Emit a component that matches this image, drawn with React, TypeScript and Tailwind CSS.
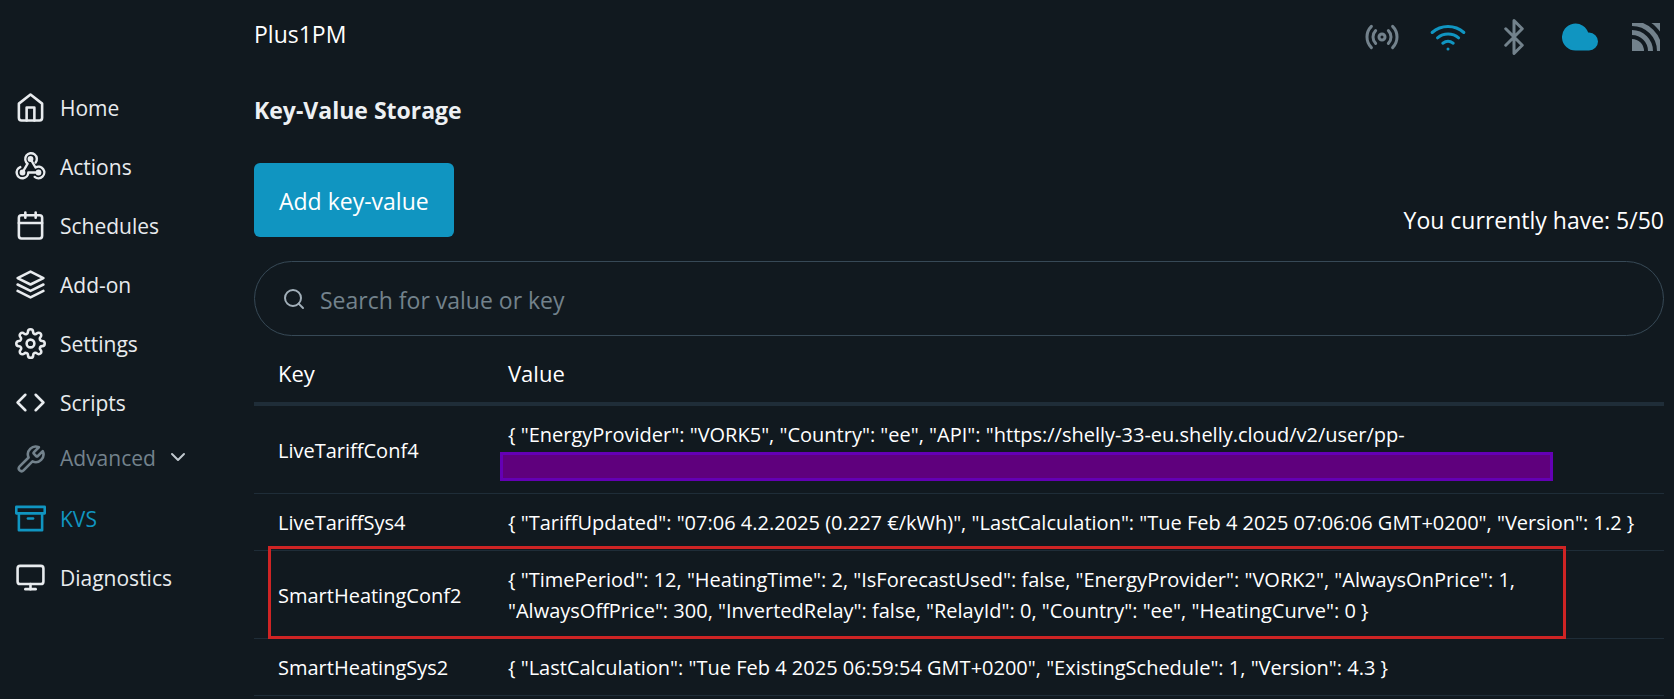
import React from "react";
import {
  FiArchive,
  FiBluetooth,
  FiCalendar,
  FiChevronDown,
  FiCloud,
  FiCode,
  FiHome,
  FiLayers,
  FiMonitor,
  FiRadio,
  FiSearch,
  FiSettings,
  FiTool,
  FiWifi,
} from "react-icons/fi";

type IconType = React.ComponentType<{ size?: number; className?: string }>;

function WebhookIcon({ size = 31, className = "" }: { size?: number; className?: string }) {
  return (
    <svg
      width={size}
      height={size}
      viewBox="0 0 31 31"
      fill="none"
      stroke="currentColor"
      strokeWidth="2.4"
      strokeLinecap="round"
      strokeLinejoin="round"
      className={className}
      aria-hidden="true"
    >
      <path d="M20.6 11.6A5.8 5.8 0 1 0 12.6 12.7L7.5 21.5" />
      <path d="M5.3 16.1A5.8 5.8 0 1 0 13.3 21.5H23.5" />
      <path d="M19.7 25.9A5.8 5.8 0 1 0 20.5 16.5L15.5 8" />
      <g fill="currentColor" stroke="none">
        <circle cx="15.5" cy="8" r="2.9" />
        <circle cx="7.5" cy="21.5" r="2.9" />
        <circle cx="23.5" cy="21.5" r="2.9" />
      </g>
    </svg>
  );
}

const nav: { label: string; Icon: IconType; tone: string }[] = [
  { label: "Home", Icon: FiHome, tone: "text-[#e8ebee]" },
  { label: "Actions", Icon: WebhookIcon, tone: "text-[#e8ebee]" },
  { label: "Schedules", Icon: FiCalendar, tone: "text-[#e8ebee]" },
  { label: "Add-on", Icon: FiLayers, tone: "text-[#e8ebee]" },
  { label: "Settings", Icon: FiSettings, tone: "text-[#e8ebee]" },
  { label: "Scripts", Icon: FiCode, tone: "text-[#e8ebee]" },
  { label: "Advanced", Icon: FiTool, tone: "text-[#73828c]" },
  { label: "KVS", Icon: FiArchive, tone: "text-[#1095c1]" },
  { label: "Diagnostics", Icon: FiMonitor, tone: "text-[#e8ebee]" },
];

function SignalTile() {
  return (
    <svg viewBox="0 0 28 28" className="size-7" fill="none" stroke="currentColor" aria-hidden="true">
      <circle cx="0" cy="28" r="12" fill="currentColor" stroke="none" />
      <circle cx="0" cy="28" r="18.5" strokeWidth="5" />
      <circle cx="0" cy="28" r="27.5" strokeWidth="5" />
      <circle cx="0" cy="28" r="39" strokeWidth="10" />
    </svg>
  );
}

const rows = [
  {
    key: "LiveTariffConf4",
    value: '{ "EnergyProvider": "VORK5", "Country": "ee", "API": "https://shelly-33-eu.shelly.cloud/v2/user/pp-',
    redacted: true,
  },
  {
    key: "LiveTariffSys4",
    value:
      '{ "TariffUpdated": "07:06 4.2.2025 (0.227 €/kWh)", "LastCalculation": "Tue Feb 4 2025 07:06:06 GMT+0200", "Version": 1.2 }',
  },
  {
    key: "SmartHeatingConf2",
    value:
      '{ "TimePeriod": 12, "HeatingTime": 2, "IsForecastUsed": false, "EnergyProvider": "VORK2", "AlwaysOnPrice": 1, "AlwaysOffPrice": 300, "InvertedRelay": false, "RelayId": 0, "Country": "ee", "HeatingCurve": 0 }',
    marked: true,
  },
  {
    key: "SmartHeatingSys2",
    value: '{ "LastCalculation": "Tue Feb 4 2025 06:59:54 GMT+0200", "ExistingSchedule": 1, "Version": 4.3 }',
  },
];

export default function App() {
  return (
    <div className="flex min-h-screen bg-[#11191f] font-['Open_Sans','Noto_Sans',sans-serif] text-white">
      <nav className="w-[254px] shrink-0 pt-[79px] pl-[15px]" aria-label="Main">
        <ul>
          {nav.map(({ label, Icon, tone }) =>
            label === "Advanced" ? (
              <li key={label} className="h-[57px]">
                <button type="button" className={`flex h-[52px] items-center gap-[14px] text-[21px] ${tone}`}>
                  <Icon size={31} className="shrink-0" />
                  <span>{label}</span>
                  <FiChevronDown size={24} className="mb-1 -ml-1 text-[#c0c8ce]" />
                </button>
              </li>
            ) : (
              <li key={label} className="h-[59px]">
                <a href="#" className={`flex h-14 items-center gap-[14px] text-[21px] ${tone}`}>
                  <Icon size={31} className="shrink-0" />
                  <span className="pt-1">{label}</span>
                </a>
              </li>
            ),
          )}
        </ul>
      </nav>

      <div className="min-w-0 flex-1 pr-[10px]">
        <header className="flex h-[74px] items-center justify-between">
          <span className="pb-1.5 text-[23px]">Plus1PM</span>
          <div className="flex items-center gap-[30px] pr-1 text-[#73828c]">
            <FiRadio size={36} />
            <FiWifi size={36} className="text-[#1095c1]" />
            <FiBluetooth size={36} />
            <FiCloud size={36} className="mr-1 fill-current text-[#1095c1]" />
            <SignalTile />
          </div>
        </header>

        <main>
          <h1 className="pt-5 text-[23px] leading-8 font-bold text-[#edf0f3]">Key-Value Storage</h1>

          <div className="mt-[37px] flex items-end justify-between">
            <button type="button" className="h-[74px] rounded-md bg-[#1095c1] px-[25px] pt-0.5 text-[23px]">
              Add key-value
            </button>
            <p className="text-[23px] leading-[34px]">You currently have: 5/50</p>
          </div>

          <label className="mt-6 flex h-[75px] items-center gap-[14px] rounded-full border border-[#374956] px-[27px]">
            <FiSearch size={24} className="shrink-0 text-[#a2afb9]" />
            <input
              type="search"
              aria-label="Search for value or key"
              placeholder="Search for value or key"
              className="min-w-0 flex-1 bg-transparent pt-1 text-[23px] outline-none placeholder:text-[#73828c]"
            />
          </label>

          <table className="w-full table-fixed border-collapse text-left">
            <thead>
              <tr className="h-[68px] border-b-4 border-[#1f2d38] text-[22px]">
                <th scope="col" className="w-[230px] pt-2 pl-6 font-normal">Key</th>
                <th scope="col" className="pt-2 pl-6 font-normal">Value</th>
              </tr>
            </thead>
            <tbody className="text-[20px] leading-[31px]">
              {rows.map((row) => (
                <tr key={row.key} className="relative border-b border-[#1f2d38]">
                  <td className="pt-[13px] pb-3 pl-6">{row.key}</td>
                  <td className="pt-[13px] pr-6 pb-3 pl-6">
                    {row.value}
                    {row.redacted && (
                      <div className="mt-0.5 mr-[87px] -ml-2 h-[29px] border-3 border-[#6400b4] bg-[#5f007d]" />
                    )}
                    {row.marked && (
                      <div className="pointer-events-none absolute -top-[5px] right-[98px] -bottom-px left-[14px] border-3 border-[#cf2424]" />
                    )}
                  </td>
                </tr>
              ))}
            </tbody>
          </table>
        </main>
      </div>
    </div>
  );
}
